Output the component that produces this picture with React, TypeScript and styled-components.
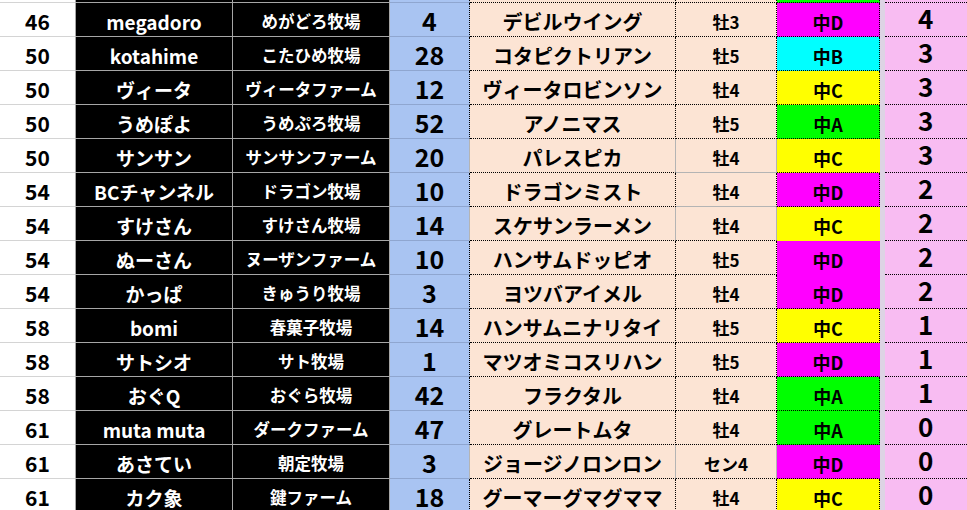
import styled, { createGlobalStyle } from "styled-components";

const GlobalStyle = createGlobalStyle`
  html, body {
    margin: 0;
    padding: 0;
    background: #ffffff;
    overflow: hidden;
  }
  body {
    font-family: "Noto Sans CJK JP", "Noto Sans", sans-serif;
  }
`;

const DOT = "1px dotted #000";
const GRAY = "1px solid #b4b4b4";
const NONE = "1px solid transparent";

const catColors: Record<string, string> = {
  A: "#00ff00",
  B: "#00ffff",
  C: "#ffff00",
  D: "#ff00ff",
};

type Entry = {
  rank: string;
  owner: string;
  farm: string;
  pts: string;
  horse: string;
  sex: string;
  cat: string;
  score: string;
  h: boolean;
  s: boolean;
  c: boolean;
};

const rows: Entry[] = [
  { rank: "", owner: "", farm: "", pts: "", horse: "", sex: "", cat: "A", score: "", h: true, s: true, c: true },
  { rank: "46", owner: "megadoro", farm: "めがどろ牧場", pts: "4", horse: "デビルウイング", sex: "牡3", cat: "D", score: "4", h: true, s: true, c: true },
  { rank: "50", owner: "kotahime", farm: "こたひめ牧場", pts: "28", horse: "コタピクトリアン", sex: "牡5", cat: "B", score: "3", h: true, s: false, c: true },
  { rank: "50", owner: "ヴィータ", farm: "ヴィータファーム", pts: "12", horse: "ヴィータロビンソン", sex: "牡4", cat: "C", score: "3", h: true, s: true, c: true },
  { rank: "50", owner: "うめぽよ", farm: "うめぷろ牧場", pts: "52", horse: "アノニマス", sex: "牡5", cat: "A", score: "3", h: true, s: true, c: true },
  { rank: "50", owner: "サンサン", farm: "サンサンファーム", pts: "20", horse: "パレスピカ", sex: "牡4", cat: "C", score: "3", h: false, s: false, c: false },
  { rank: "54", owner: "BCチャンネル", farm: "ドラゴン牧場", pts: "10", horse: "ドラゴンミスト", sex: "牡4", cat: "D", score: "2", h: true, s: false, c: true },
  { rank: "54", owner: "すけさん", farm: "すけさん牧場", pts: "14", horse: "スケサンラーメン", sex: "牡4", cat: "C", score: "2", h: false, s: false, c: false },
  { rank: "54", owner: "ぬーさん", farm: "ヌーザンファーム", pts: "10", horse: "ハンサムドッピオ", sex: "牡5", cat: "D", score: "2", h: true, s: true, c: false },
  { rank: "54", owner: "かっぱ", farm: "きゅうり牧場", pts: "3", horse: "ヨツバアイメル", sex: "牡4", cat: "D", score: "2", h: true, s: true, c: false },
  { rank: "58", owner: "bomi", farm: "春菓子牧場", pts: "14", horse: "ハンサムニナリタイ", sex: "牡5", cat: "C", score: "1", h: true, s: true, c: true },
  { rank: "58", owner: "サトシオ", farm: "サト牧場", pts: "1", horse: "マツオミコスリハン", sex: "牡5", cat: "D", score: "1", h: true, s: true, c: false },
  { rank: "58", owner: "おぐQ", farm: "おぐら牧場", pts: "42", horse: "フラクタル", sex: "牡4", cat: "A", score: "1", h: true, s: true, c: true },
  { rank: "61", owner: "muta muta", farm: "ダークファーム", pts: "47", horse: "グレートムタ", sex: "牡4", cat: "A", score: "0", h: true, s: true, c: true },
  { rank: "61", owner: "あさてい", farm: "朝定牧場", pts: "3", horse: "ジョージノロンロン", sex: "セン4", cat: "D", score: "0", h: false, s: false, c: false },
  { rank: "61", owner: "カク象", farm: "鍵ファーム", pts: "18", horse: "グーマーグマグママ", sex: "牡4", cat: "C", score: "0", h: true, s: true, c: true },
];

const Viewport = styled.div`
  height: 510px;
  overflow: hidden;
`;

const Sheet = styled.div`
  display: flex;
  flex-direction: column;
  margin-top: -31px;
`;

const Row = styled.div`
  display: grid;
  grid-template-columns: 76px 157px 157px 80px 206px 101px 103px 5px 100px;
  grid-template-rows: 34px;
  height: 34px;
  flex-shrink: 0;
`;

const Cell = styled.div`
  box-sizing: border-box;
  display: flex;
  align-items: center;
  justify-content: center;
  min-height: 0;
  padding-top: 4px;
  line-height: 1;
  white-space: nowrap;
  font-weight: 700;
  color: #000;
`;

const RankCell = styled(Cell)`
  background: #ffffff;
  border-right: 1px solid #a6a6a6;
  border-bottom: 1px solid #d4d4d4;
  font-size: 21px;
`;

const DarkCell = styled(Cell)<{ $size: number }>`
  background: #000000;
  color: #ffffff;
  border-right: 1px solid #a6a6a6;
  border-bottom: 1px solid #a6a6a6;
  font-size: ${(p) => p.$size}px;
`;

const PointsCell = styled(Cell)<{ $edge: string }>`
  background: #a9c4f2;
  border-bottom: 1px solid #8fa6d0;
  border-right: ${(p) => p.$edge};
  font-size: 25px;
  padding-top: 2px;
`;

const PeachCell = styled(Cell)<{ $right: string; $bottom: string; $size: number; $weight: number }>`
  background: #fce4d4;
  border-right: ${(p) => p.$right};
  border-bottom: ${(p) => p.$bottom};
  font-size: ${(p) => p.$size}px;
  font-weight: ${(p) => p.$weight};
`;

const CategoryCell = styled(Cell)<{ $bg: string; $right: string; $bottom: string }>`
  background: ${(p) => p.$bg};
  border-right: ${(p) => p.$right};
  border-bottom: ${(p) => p.$bottom};
  font-size: 18px;
`;

const Strip = styled.div`
  background: #ddd3e4;
`;

const ScoreCell = styled(Cell)`
  background: #f8bcf2;
  border-bottom: ${DOT};
  font-size: 26px;
  justify-content: flex-start;
  padding-top: 0;
  padding-bottom: 3px;
  padding-left: 33px;
`;

function App() {
  return (
    <Viewport>
      <GlobalStyle />
      <Sheet>
        {rows.map((r, i) => {
          const next = rows[i + 1];
          const hBottom = r.h || (next && next.h) ? DOT : GRAY;
          const sBottom = r.s || (next && next.s) ? DOT : GRAY;
          const cBottom = r.c || (next && next.c) ? DOT : NONE;
          return (
            <Row key={i}>
              <RankCell>{r.rank}</RankCell>
              <DarkCell $size={19}>{r.owner}</DarkCell>
              <DarkCell $size={16.5}>{r.farm}</DarkCell>
              <PointsCell $edge={r.h ? DOT : GRAY}>{r.pts}</PointsCell>
              <PeachCell $right={r.h || r.s ? DOT : GRAY} $bottom={hBottom} $size={20} $weight={700}>
                {r.horse}
              </PeachCell>
              <PeachCell $right={r.s || r.c ? DOT : GRAY} $bottom={sBottom} $size={17} $weight={700}>
                {r.sex}
              </PeachCell>
              <CategoryCell $bg={catColors[r.cat]} $right={r.c ? DOT : NONE} $bottom={cBottom}>
                {r.cat ? `中${r.cat}` : ""}
              </CategoryCell>
              <Strip />
              <ScoreCell>{r.score}</ScoreCell>
            </Row>
          );
        })}
      </Sheet>
    </Viewport>
  );
}

export default App;
